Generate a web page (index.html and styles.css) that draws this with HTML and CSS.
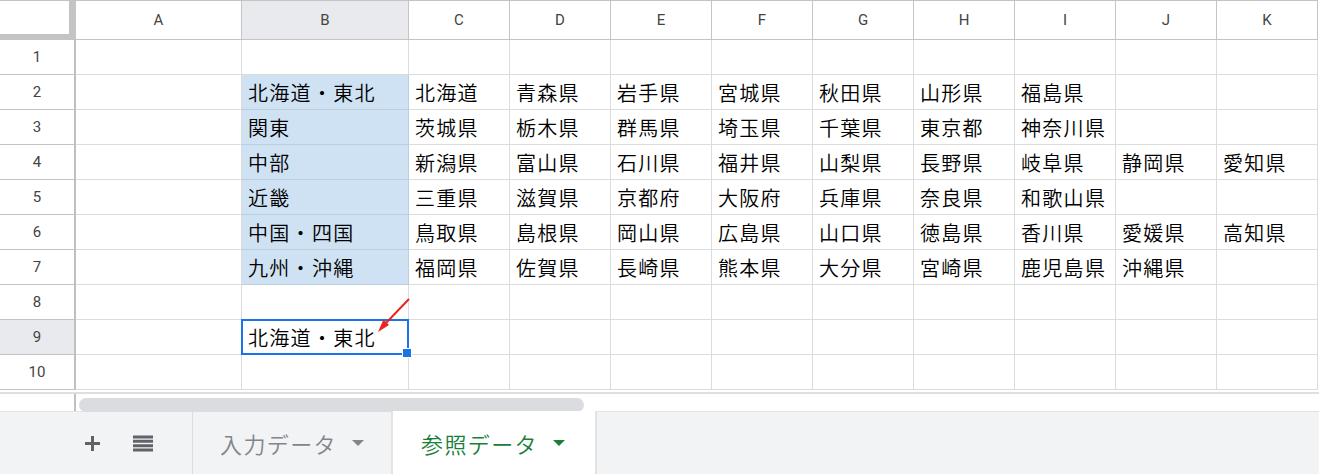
FILE: index.html
```html
<!DOCTYPE html>
<html lang="ja">
<head>
  <meta charset="UTF-8">
  <title>参照データ</title>
  <link rel="stylesheet" href="styles.css">
</head>
<body>
  <div class="sheet">
    <div class="grid">
      <div class="corner"></div>
      <div class="col-head">A</div>
      <div class="col-head current">B</div>
      <div class="col-head">C</div>
      <div class="col-head">D</div>
      <div class="col-head">E</div>
      <div class="col-head">F</div>
      <div class="col-head">G</div>
      <div class="col-head">H</div>
      <div class="col-head">I</div>
      <div class="col-head">J</div>
      <div class="col-head">K</div>

      <div class="row-head">1</div>
      <div class="cell"></div><div class="cell"></div><div class="cell"></div><div class="cell"></div><div class="cell"></div><div class="cell"></div><div class="cell"></div><div class="cell"></div><div class="cell"></div><div class="cell"></div><div class="cell"></div>

      <div class="row-head">2</div>
      <div class="cell"></div>
      <div class="cell area">北海道・東北</div>
      <div class="cell">北海道</div>
      <div class="cell">青森県</div>
      <div class="cell">岩手県</div>
      <div class="cell">宮城県</div>
      <div class="cell">秋田県</div>
      <div class="cell">山形県</div>
      <div class="cell">福島県</div>
      <div class="cell"></div>
      <div class="cell"></div>

      <div class="row-head">3</div>
      <div class="cell"></div>
      <div class="cell area">関東</div>
      <div class="cell">茨城県</div>
      <div class="cell">栃木県</div>
      <div class="cell">群馬県</div>
      <div class="cell">埼玉県</div>
      <div class="cell">千葉県</div>
      <div class="cell">東京都</div>
      <div class="cell">神奈川県</div>
      <div class="cell"></div>
      <div class="cell"></div>

      <div class="row-head">4</div>
      <div class="cell"></div>
      <div class="cell area">中部</div>
      <div class="cell">新潟県</div>
      <div class="cell">富山県</div>
      <div class="cell">石川県</div>
      <div class="cell">福井県</div>
      <div class="cell">山梨県</div>
      <div class="cell">長野県</div>
      <div class="cell">岐阜県</div>
      <div class="cell">静岡県</div>
      <div class="cell">愛知県</div>

      <div class="row-head">5</div>
      <div class="cell"></div>
      <div class="cell area">近畿</div>
      <div class="cell">三重県</div>
      <div class="cell">滋賀県</div>
      <div class="cell">京都府</div>
      <div class="cell">大阪府</div>
      <div class="cell">兵庫県</div>
      <div class="cell">奈良県</div>
      <div class="cell">和歌山県</div>
      <div class="cell"></div>
      <div class="cell"></div>

      <div class="row-head">6</div>
      <div class="cell"></div>
      <div class="cell area">中国・四国</div>
      <div class="cell">鳥取県</div>
      <div class="cell">島根県</div>
      <div class="cell">岡山県</div>
      <div class="cell">広島県</div>
      <div class="cell">山口県</div>
      <div class="cell">徳島県</div>
      <div class="cell">香川県</div>
      <div class="cell">愛媛県</div>
      <div class="cell">高知県</div>

      <div class="row-head">7</div>
      <div class="cell"></div>
      <div class="cell area">九州・沖縄</div>
      <div class="cell">福岡県</div>
      <div class="cell">佐賀県</div>
      <div class="cell">長崎県</div>
      <div class="cell">熊本県</div>
      <div class="cell">大分県</div>
      <div class="cell">宮崎県</div>
      <div class="cell">鹿児島県</div>
      <div class="cell">沖縄県</div>
      <div class="cell"></div>

      <div class="row-head">8</div>
      <div class="cell"></div><div class="cell"></div><div class="cell"></div><div class="cell"></div><div class="cell"></div><div class="cell"></div><div class="cell"></div><div class="cell"></div><div class="cell"></div><div class="cell"></div><div class="cell"></div>

      <div class="row-head current">9</div>
      <div class="cell"></div>
      <div class="cell selected">北海道・東北<span class="fill-handle"></span></div>
      <div class="cell"></div><div class="cell"></div><div class="cell"></div><div class="cell"></div><div class="cell"></div><div class="cell"></div><div class="cell"></div><div class="cell"></div><div class="cell"></div>

      <div class="row-head">10</div>
      <div class="cell"></div><div class="cell"></div><div class="cell"></div><div class="cell"></div><div class="cell"></div><div class="cell"></div><div class="cell"></div><div class="cell"></div><div class="cell"></div><div class="cell"></div><div class="cell"></div>
    </div>

    <div class="hscroll">
      <div class="hscroll-gutter"></div>
      <div class="hscroll-thumb"></div>
    </div>

    <div class="tabbar">
      <div class="tab-tools">
        <div class="tab-icon">
          <svg width="17" height="17" viewBox="0 0 17 17"><path d="M8.5 1v15M1 8.5h15" stroke="#5f6368" stroke-width="3"/></svg>
        </div>
        <div class="tab-icon">
          <svg width="20" height="17" viewBox="0 0 20 17"><path d="M0 2h20M0 6.3h20M0 10.7h20M0 15h20" stroke="#5f6368" stroke-width="3"/></svg>
        </div>
      </div>
      <div class="tab">入力データ<span class="tab-caret"></span></div>
      <div class="tab tab-active">参照データ<span class="tab-caret"></span></div>
    </div>

    <!-- 注釈の矢印 -->
    <svg class="arrow" width="1319" height="474" viewBox="0 0 1319 474">
      <line x1="409" y1="299" x2="386" y2="323" stroke="#e8261f" stroke-width="2"/>
      <polygon points="378,332 383.5,319.5 389,325" fill="#e8261f"/>
    </svg>
  </div>
</body>
</html>
```

FILE: styles.css
```css
body {
  margin: 0;
  background-color: #ffffff;
  font-family: "Noto Sans CJK JP", "Liberation Sans", sans-serif;
  color: #000;
}
.sheet {
  position: relative;
  width: 1319px;
  height: 474px;
  overflow: hidden;
}
.grid {
  display: grid;
  grid-template-columns: 76px 166px 167px repeat(9, 101px);
  grid-template-rows: 40px repeat(10, 35px);
}
.corner {
  box-sizing: border-box;
  background-color: #fff;
  border-top: 1px solid #c4c4c4;
  border-right: 7px solid #c4c4c4;
  border-bottom: 6px solid #c4c4c4;
}
.col-head, .row-head {
  box-sizing: border-box;
  display: flex;
  align-items: center;
  justify-content: center;
  font-family: Roboto, "Liberation Sans", sans-serif;
  font-size: 15px;
  color: #444;
  background-color: #fff;
}
.col-head {
  border-top: 1px solid #c4c4c4;
  border-right: 1px solid #c4c4c4;
  border-bottom: 1px solid #c4c4c4;
}
.row-head {
  border-right: 2px solid #c0c0c0;
  border-bottom: 1px solid #c4c4c4;
}
.current {
  background-color: #e8eaed;
}
.cell {
  box-sizing: border-box;
  position: relative;
  display: flex;
  align-items: center;
  padding-left: 6px;
  font-size: 20px;
  font-weight: 350;
  letter-spacing: 1.3px;
  white-space: nowrap;
  border-right: 1px solid #dcdcdc;
  border-bottom: 1px solid #dcdcdc;
}
.area {
  background-color: #cfe2f3;
  border-color: #bccddb;
}
.selected::after {
  content: "";
  position: absolute;
  left: -1px;
  top: -1px;
  right: -1px;
  bottom: -1px;
  border: 2px solid #1a73e8;
}
.fill-handle {
  position: absolute;
  right: -4px;
  bottom: -4px;
  width: 8px;
  height: 8px;
  background-color: #1a73e8;
  border: 1px solid #fff;
  z-index: 1;
}
.hscroll {
  display: flex;
  height: 21px;
  box-sizing: border-box;
  padding-top: 2px;
  border-top: 2px solid #fff;
  box-shadow: inset 0 2px 0 #dfdfdf;
}
.hscroll-gutter {
  width: 76px;
  box-sizing: border-box;
  border-right: 2px solid #c0c0c0;
}
.hscroll-thumb {
  width: 505px;
  height: 14px;
  margin: 4px 0 0 3px;
  border-radius: 7px;
  background-color: #dadce0;
}
.tabbar {
  display: flex;
  height: 63px;
  box-sizing: border-box;
  background-color: #f1f3f4;
  border-top: 1px solid #e3e3e3;
}
.tab-tools {
  display: flex;
  width: 193px;
  box-sizing: border-box;
  padding-left: 68px;
  gap: 3px;
  border-right: 1px solid #dadce0;
}
.tab-icon {
  width: 48px;
  display: flex;
  align-items: center;
  justify-content: center;
}
.tab {
  display: flex;
  align-items: center;
  width: 198px;
  box-sizing: border-box;
  padding-left: 27px;
  font-size: 22px;
  font-weight: 350;
  letter-spacing: 1.4px;
  color: #80868b;
}
.tab-caret {
  margin-left: 15px;
  width: 0;
  height: 0;
  border-left: 6.5px solid transparent;
  border-right: 6.5px solid transparent;
  border-top: 6px solid #80868b;
}
.tab-active {
  width: 206px;
  padding-left: 28px;
  margin-top: -1px;
  background-color: #fff;
  color: #188038;
  border-left: 2px solid #e3e3e3;
  border-right: 2px solid #e3e3e3;
}
.tab-active .tab-caret {
  border-top-color: #188038;
}
.arrow {
  position: absolute;
  left: 0;
  top: 0;
  pointer-events: none;
}
```
